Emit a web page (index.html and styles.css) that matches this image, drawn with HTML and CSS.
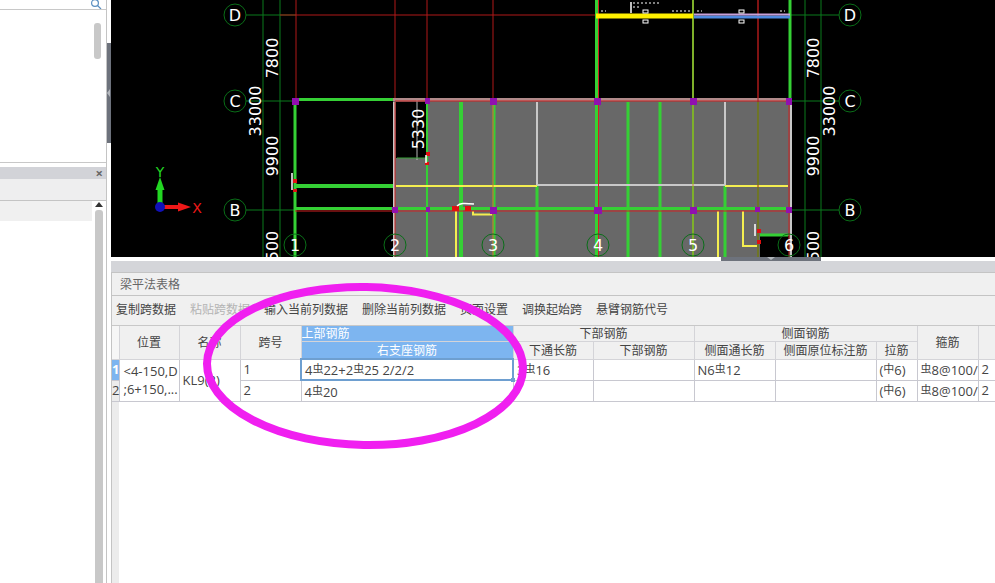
FILE: index.html
```html
<!DOCTYPE html>
<html lang="zh-CN">
<head>
    <meta charset="UTF-8">
    <title>梁平法表格</title>
    <link rel="stylesheet" href="styles.css">
</head>
<body>
    <div class="app">
        <div class="sidebar">
            <div class="side-top">
                <div class="search-row">
                    <svg class="search-icon" viewBox="0 0 12 9"><circle cx="5" cy="3" r="3.4"/><path d="M7.5 5.5 L11 9"/></svg>
                </div>
                <div class="side-list"><div class="thumb thumb-top"></div></div>
            </div>
            <div class="side-bottom">
                <div class="side-head"><span class="side-close">×</span></div>
                <div class="side-tools"></div>
                <div class="side-rows">
                    <div class="side-row"></div>
                    <div class="side-scroll">
                        <div class="arrow-up"></div>
                        <div class="thumb thumb-low"></div>
                    </div>
                </div>
            </div>
        </div>
        <div class="v-split"><div class="v-grip"><span class="v-arrow"></span></div></div>

        <div class="main">
            <div class="canvas">
                <svg class="cad" viewBox="111 0 884 257">
                    <!-- grey floor -->
                    <path class="floor" d="M393 98 H792 V257 H393 Z M396 102 V158 H426 V102 Z"/>
                    <rect class="hole" x="760" y="236" width="29" height="21"/>

                    <!-- axis lines -->
                    <g class="axis">
                        <path d="M246 15 H296 M246 101 H296 M246 210 H296"/>
                        <path d="M263 0 V257 M280 0 V257 M805 0 V257 M821 0 V257"/>
                        <path d="M790 15 H839 M790 101 H839 M790 210 H839"/>
                    </g>
                    <g class="red-thin">
                        <path d="M296 0 V100 M395 0 V100 M427 0 V100 M493 0 V100 M758 0 V100"/>
                        <path d="M280 15 H597"/>
                    </g>

                    <!-- beams -->
                    <path class="pink-edge" d="M393 99.500 H792"/>
                    <g class="beam">
                        <path d="M295 101 V257"/>
                        <path d="M296 99.500 H393"/>
                        <path d="M790 0 V100"/>
                        <path d="M295 208.500 H790"/>
                    </g>
                    <g class="beam-wide">
                        <path d="M296 186 H393"/>
                        <path d="M461 102 V257"/>
                        <path d="M597 0 V257"/>
                    </g>
                    <g class="beam-mid">
                        <path d="M628 102 V257 M660 102 V257 M537 186 V257 M725 186 V257"/>
                        <path d="M760 235 H788"/>
                    </g>
                    <g class="beam-thin">
                        <path d="M427 102 V257 M494.500 102 V257 M693 0 V257 M758 102 V257"/>
                    </g>
                    <g class="grey-line">
                        <path d="M537 102 V185 M725 102 V185"/>
                        <path d="M537 185 H725"/>
                        <path d="M394 102 V257 M791 102 V257"/>
                    </g>
                    <path class="grey-thin" d="M417 100 V160"/>
                    <path class="green-thin" d="M397 158 H426"/>
                    <g class="yellow">
                        <path d="M396 186 H537 M725 186 H788"/>
                        <path d="M456 210 V257"/>
                        <path d="M473 211 V214.500 H492"/>
                        <path d="M743 211 V246 H757"/>
                        <path d="M718 211 V257"/>
                    </g>
                    <g class="orange">
                        <path d="M493 102 V257 M693 0 V257"/>
                    </g>
                    <g class="red-line">
                        <path d="M395 101 H790 M295 211 H790"/>
                        <path d="M598.500 0 V257 M789 101 V257 M395 102 V257"/>
                    </g>
                    <path class="red-dark" d="M758 0 V257"/>

                    <!-- top beam on axis D -->
                    <path class="top-yellow" d="M596 16 H693"/>
                    <path class="top-blue" d="M694 17 H790"/>
                    <path class="top-pink" d="M694 14.500 H790"/>
                    <g class="tick">
                        <rect x="643" y="10" width="5" height="3"/>
                        <rect x="643" y="20" width="5" height="3"/>
                        <rect x="739" y="10" width="5" height="3"/>
                        <rect x="739" y="20" width="5" height="3"/>
                    </g>
                    <path class="white-line" d="M631 2 V13"/>
                    <path class="noise" d="M601 11 H606 M633 3 H660 M633 7 H640 M672 11 H690 M697 11 H702 M780 11 H785"/>

                    <!-- columns -->
                    <g class="column">
                        <rect x="292" y="98" width="7" height="7"/>
                        <rect x="425" y="98" width="5" height="6"/>
                        <rect x="490" y="98" width="7" height="7"/>
                        <rect x="594" y="98" width="7" height="7"/>
                        <rect x="690" y="98" width="7" height="7"/>
                        <rect x="786" y="98" width="6" height="7"/>
                        <rect x="392" y="207" width="6" height="6"/>
                        <rect x="426" y="207" width="4" height="5"/>
                        <rect x="490" y="207" width="7" height="7"/>
                        <rect x="594" y="207" width="8" height="7"/>
                        <rect x="690" y="207" width="7" height="7"/>
                        <rect x="755" y="207" width="5" height="5"/>
                        <rect x="786" y="207" width="6" height="6"/>
                    </g>
                    <g class="column-red">
                        <rect x="452" y="206" width="7" height="5"/>
                        <rect x="465" y="206" width="6" height="5"/>
                        <rect x="426" y="152" width="4" height="4"/>
                        <rect x="425" y="162" width="4" height="3"/>
                        <rect x="293" y="179" width="4" height="4"/>
                        <rect x="293" y="189" width="4" height="3"/>
                        <rect x="757" y="229" width="4" height="4"/>
                        <rect x="757" y="240" width="4" height="4"/>
                    </g>
                    <g class="white-line">
                        <path d="M292 173 V190 M426 155 V163 M457 206 C460 203 464 203 474 204 M755 224 V236"/>
                    </g>

                    <!-- grid bubbles -->
                    <g class="bubble">
                        <circle cx="235" cy="15" r="11"/>
                        <circle cx="235" cy="101" r="11"/>
                        <circle cx="235" cy="210" r="11"/>
                        <circle cx="850" cy="15" r="11"/>
                        <circle cx="850" cy="101" r="11"/>
                        <circle cx="850" cy="210" r="11"/>
                        <circle cx="295" cy="245" r="11"/>
                        <circle cx="395" cy="245" r="11"/>
                        <circle cx="493" cy="245" r="11"/>
                        <circle cx="598" cy="245" r="11"/>
                        <circle cx="693" cy="245" r="11"/>
                        <circle cx="789" cy="245" r="11"/>
                    </g>
                    <g class="bubble-text">
                        <text x="235" y="21">D</text>
                        <text x="235" y="107">C</text>
                        <text x="235" y="216">B</text>
                        <text x="850" y="21">D</text>
                        <text x="850" y="107">C</text>
                        <text x="850" y="216">B</text>
                        <text x="295" y="251">1</text>
                        <text x="395" y="251">2</text>
                        <text x="493" y="251">3</text>
                        <text x="598" y="251">4</text>
                        <text x="693" y="251">5</text>
                        <text x="789" y="251">6</text>
                    </g>

                    <!-- dimensions -->
                    <g class="dim">
                        <text transform="translate(278 58) rotate(-90)">7800</text>
                        <text transform="translate(261 111) rotate(-90)">33000</text>
                        <text transform="translate(278 156) rotate(-90)">9900</text>
                        <text transform="translate(278 246) rotate(-90)">500</text>
                        <text transform="translate(819 58) rotate(-90)">7800</text>
                        <text transform="translate(835 111) rotate(-90)">33000</text>
                        <text transform="translate(819 156) rotate(-90)">9900</text>
                        <text transform="translate(819 246) rotate(-90)">500</text>
                        <text transform="translate(424 129) rotate(-90)">5330</text>
                    </g>

                    <!-- ucs -->
                    <path class="ucs-y" d="M160 207 V190"/>
                    <path class="ucs-y-head" d="M155.500 190 L160 177 L164.500 190 Z"/>
                    <path class="ucs-x" d="M160 207 H178"/>
                    <path class="ucs-x-head" d="M178 202.500 L191 207 L178 211.500 Z"/>
                    <circle class="ucs-dot" cx="160" cy="207" r="5"/>
                    <text class="ucs-label-y" x="160" y="177">Y</text>
                    <text class="ucs-label-x" x="197" y="213">X</text>
                </svg>
            </div>
            <div class="h-split"><div class="h-grip"><span class="h-arrow"></span></div></div>
            <div class="panel-gap"></div>

            <div class="panel">
                <div class="panel-title">梁平法表格</div>
                <div class="toolbar">
                    <span>复制跨数据</span>
                    <span class="disabled">粘贴跨数据</span>
                    <span>输入当前列数据</span>
                    <span>删除当前列数据</span>
                    <span>页面设置</span>
                    <span>调换起始跨</span>
                    <span>悬臂钢筋代号</span>
                </div>
                <div class="grid-wrap">
                    <table class="grid">
                        <colgroup>
                            <col class="c-idx"><col class="c-pos"><col class="c-name"><col class="c-span">
                            <col class="c-top"><col class="c-low1"><col class="c-low2"><col class="c-side1">
                            <col class="c-side2"><col class="c-tie"><col class="c-stir"><col class="c-more">
                        </colgroup>
                        <thead>
                            <tr class="head-1">
                                <th class="corner" rowspan="2"></th>
                                <th rowspan="2">位置</th>
                                <th rowspan="2">名称</th>
                                <th rowspan="2">跨号</th>
                                <th class="sel left">上部钢筋</th>
                                <th colspan="2">下部钢筋</th>
                                <th colspan="3">侧面钢筋</th>
                                <th rowspan="2">箍筋</th>
                                <th rowspan="2"></th>
                            </tr>
                            <tr class="head-2">
                                <th class="sel">右支座钢筋</th>
                                <th>下通长筋</th>
                                <th>下部钢筋</th>
                                <th>侧面通长筋</th>
                                <th>侧面原位标注筋</th>
                                <th>拉筋</th>
                            </tr>
                        </thead>
                        <tbody>
                            <tr>
                                <td class="idx on">1</td>
                                <td class="pos" rowspan="2">&lt;4-150,D<br>;6+150,...</td>
                                <td rowspan="2">KL9(2)</td>
                                <td>1</td>
                                <td class="active">4<i>虫</i>22+2<i>虫</i>25 2/2/2<b class="handle"></b></td>
                                <td>3<i>虫</i>16</td>
                                <td></td>
                                <td>N6<i>虫</i>12</td>
                                <td></td>
                                <td>(<i>中</i>6)</td>
                                <td><i>虫</i>8@100/</td>
                                <td>2</td>
                            </tr>
                            <tr>
                                <td class="idx">2</td>
                                <td>2</td>
                                <td>4<i>虫</i>20</td>
                                <td></td>
                                <td></td>
                                <td></td>
                                <td></td>
                                <td>(<i>中</i>6)</td>
                                <td><i>虫</i>8@100/</td>
                                <td>2</td>
                            </tr>
                        </tbody>
                    </table>
                </div>
            </div>
        </div>
    </div>

    <!-- hand drawn mark on top of the screenshot -->
    <svg class="mark" viewBox="0 0 995 583"><ellipse cx="365" cy="366" rx="158" ry="79" transform="rotate(1 365 366)"/></svg>
</body>
</html>
```

FILE: styles.css
```css
html, body {
    margin: 0;
    padding: 0;
    width: 995px;
    height: 583px;
    overflow: hidden;
    background-color: #fff;
    font-family: "Open Sans", "Noto Sans CJK SC", sans-serif;
    font-size: 12px;
    color: #444;
}
.app {
    display: flex;
    width: 995px;
    height: 583px;
}

/* left side */
.sidebar {
    width: 106px;
    display: flex;
    flex-direction: column;
    border-right: 1px solid #c4c4c4;
    box-sizing: content-box;
}
.side-top {
    height: 163px;
    display: flex;
    flex-direction: column;
    border-bottom: 1px solid #c8c8c8;
    box-sizing: border-box;
}
.search-row {
    height: 10px;
    border-bottom: 1px solid #c8c8c8;
    box-sizing: border-box;
    position: relative;
}
.search-icon {
    position: absolute;
    left: 90px;
    top: 0;
    width: 12px;
    height: 9px;
    fill: none;
    stroke: #5a8fc0;
    stroke-width: 1.2;
    overflow: hidden;
}
.side-list {
    flex: 1;
    padding: 13px 5px 0 0;
    display: flex;
    justify-content: flex-end;
}
.thumb {
    background-color: #c8c8c8;
    border-radius: 3px;
}
.thumb-top {
    width: 7px;
    height: 36px;
}
.side-bottom {
    flex: 1;
    margin-top: 4px;
    display: flex;
    flex-direction: column;
    min-height: 0;
}
.side-head {
    height: 12px;
    background-color: #d2d3d8;
    display: flex;
    justify-content: flex-end;
    align-items: center;
    padding-right: 3px;
}
.side-close {
    color: #666;
    font-size: 13px;
    line-height: 12px;
    font-weight: bold;
}
.side-tools {
    height: 21px;
    background-color: #eeeeef;
    border-bottom: 1px solid #c4c4c4;
}
.side-rows {
    flex: 1;
    display: flex;
    min-height: 0;
}
.side-row {
    width: 92px;
    height: 20px;
    background-color: #f0f0f0;
}
.side-scroll {
    flex: 1;
    padding: 1px 3px 0 3px;
    display: flex;
    flex-direction: column;
    align-items: center;
    gap: 3px;
}
.arrow-up {
    width: 0;
    height: 0;
    border-left: 4px solid transparent;
    border-right: 4px solid transparent;
    border-bottom: 5px solid #333;
}
.thumb-low {
    width: 8px;
    flex: 1;
    border-radius: 3px 3px 0 0;
}
.v-split {
    width: 4px;
    padding-top: 43px;
    box-sizing: border-box;
}
.v-grip {
    position: relative;
    height: 100px;
    background-color: #6d727c;
}
.v-arrow {
    position: absolute;
    left: 0;
    top: 46px;
    border-top: 4px solid transparent;
    border-bottom: 4px solid transparent;
    border-right: 3px solid #b4b8be;
}

/* right side */
.main {
    flex: 1;
    min-width: 0;
    display: flex;
    flex-direction: column;
}
.canvas {
    height: 257px;
    background-color: #000;
}
.cad {
    display: block;
    width: 884px;
    height: 257px;
    fill: none;
}
.floor { fill: #686868; fill-rule: evenodd; }
.hole { fill: #000; }
.axis { stroke: #0b7a1c; stroke-width: 1; }
.red-thin { stroke: #b01818; stroke-width: 1; }
.red-dark { stroke: #a81a1a; stroke-width: 1; }
.pink-edge { stroke: #b08a8a; stroke-width: 3; }
.beam { stroke: #35d035; stroke-width: 3; }
.beam-wide { stroke: #35d035; stroke-width: 4; }
.beam-mid { stroke: #35d035; stroke-width: 3; }
.beam-thin { stroke: #35d035; stroke-width: 2; }
.grey-line { stroke: #c8c8c8; stroke-width: 2; }
.grey-thin { stroke: #b8b8b8; stroke-width: 1; }
.green-thin { stroke: #35a035; stroke-width: 1; }
.yellow { stroke: #f4ee50; stroke-width: 2; }
.orange { stroke: #c89020; stroke-width: 1; }
.red-line { stroke: #d02020; stroke-width: 1; }
.top-yellow { stroke: #fff000; stroke-width: 5; }
.top-blue { stroke: #4f8ae0; stroke-width: 3; }
.top-pink { stroke: #c8a0d8; stroke-width: 2; }
.tick { stroke: #fff; stroke-width: 1; }
.white-line { stroke: #fff; stroke-width: 1.500; }
.noise { stroke: #fff; stroke-width: 1; stroke-dasharray: 2 2; }
.column { fill: #9010b0; }
.column-red { fill: #e01010; }
.bubble { stroke: #0a6e18; stroke-width: 1; }
.bubble-text text {
    fill: #fff;
    font-family: "DejaVu Sans", sans-serif;
    font-size: 16px;
    font-weight: normal;
    text-anchor: middle;
}
.dim text {
    fill: #fff;
    font-family: "DejaVu Sans", sans-serif;
    font-size: 16px;
    text-anchor: middle;
}
.ucs-y { stroke: #22d622; stroke-width: 5; }
.ucs-y-head { fill: #22d622; }
.ucs-x { stroke: #ee1818; stroke-width: 4; }
.ucs-x-head { fill: #ee1818; }
.ucs-dot { fill: #1010b8; }
.ucs-label-y, .ucs-label-x {
    font-family: "DejaVu Sans", sans-serif;
    font-size: 14px;
    text-anchor: middle;
}
.ucs-label-y { fill: #22d622; }
.ucs-label-x { fill: #ee1818; }

.h-split {
    height: 4px;
    padding-left: 610px;
}
.h-grip {
    position: relative;
    width: 100px;
    height: 4px;
    background-color: #6d727c;
}
.h-arrow {
    position: absolute;
    left: 46px;
    top: 0;
    border-left: 4px solid transparent;
    border-right: 4px solid transparent;
    border-top: 3px solid #b4b8be;
}
.panel-gap {
    height: 11px;
    background-color: #d4d5d9;
}
.panel {
    flex: 1;
    min-height: 0;
    display: flex;
    flex-direction: column;
    border-left: 1px solid #c4c4c4;
}
.panel-title {
    height: 22px;
    line-height: 24px;
    padding-left: 8px;
    background-color: #f0f0f0;
    border-top: 1px solid #c4c4c4;
    border-bottom: 1px solid #c4c4c4;
    color: #666;
}
.toolbar {
    height: 30px;
    display: flex;
    align-items: center;
    gap: 14px;
    padding: 0 0 3px 4px;
    background-color: #f0f0f0;
    border-bottom: 1px solid #c8c8c8;
    box-sizing: border-box;
}
.toolbar .disabled {
    color: #b4b4b4;
}
.grid-wrap {
    flex: 1;
    background: linear-gradient(to right, #ececec 7px, #fff 7px);
}
.grid {
    table-layout: fixed;
    border-collapse: collapse;
    width: 883px;
}
.c-idx { width: 7px; }
.c-pos { width: 60px; }
.c-name { width: 61px; }
.c-span { width: 61px; }
.c-top { width: 212px; }
.c-low1 { width: 80px; }
.c-low2 { width: 101px; }
.c-side1 { width: 81px; }
.c-side2 { width: 101px; }
.c-tie { width: 41px; }
.c-stir { width: 61px; }
.c-more { width: 17px; }
.grid th {
    padding: 0;
    font-weight: normal;
    background-color: #f0f0f0;
    border: 1px solid #d4d4d8;
    border-top: 0;
    overflow: hidden;
    white-space: nowrap;
}
.grid .head-1 th { height: 15px; line-height: 15px; }
.grid .head-2 th { height: 14px; line-height: 14px; padding-top: 2px; }
.grid th.corner { background-color: #f6f6f6; border-left: 0; }
.grid th.sel {
    background-color: #7db5f0;
    color: #fff;
}
.grid th.left {
    text-align: left;
}
.grid td {
    position: relative;
    height: 20px;
    padding: 0 0 0 3px;
    border: 1px solid #c8c8d0;
    white-space: nowrap;
    overflow: hidden;
    font-size: 13px;
    line-height: 15px;
}
.grid tbody tr:first-child td { height: 19px; }
.grid td.idx {
    padding: 0;
    text-align: center;
    background-color: #ececec;
    border-left: 0;
    border-right: 0;
    overflow: visible;
}
.grid td.idx.on {
    background-color: #7db5f0;
    color: #fff;
    font-weight: bold;
}
.grid td.pos {
    padding-left: 4px;
    font-size: 13px;
    line-height: 18px;
}
.grid td.active {
    border: 2px solid #6e9fd0;
    overflow: visible;
}
.grid td i {
    font-style: normal;
    font-size: 11px;
    vertical-align: 2px;
    font-family: "Noto Sans CJK SC", sans-serif;
}
.handle {
    position: absolute;
    right: -3px;
    bottom: -3px;
    width: 4px;
    height: 4px;
    background-color: #6e9fd0;
}

/* ink on top */
.mark {
    position: absolute;
    left: 0;
    top: 0;
    width: 995px;
    height: 583px;
    fill: none;
    stroke: #f01ff0;
    stroke-width: 8;
    pointer-events: none;
}
```
